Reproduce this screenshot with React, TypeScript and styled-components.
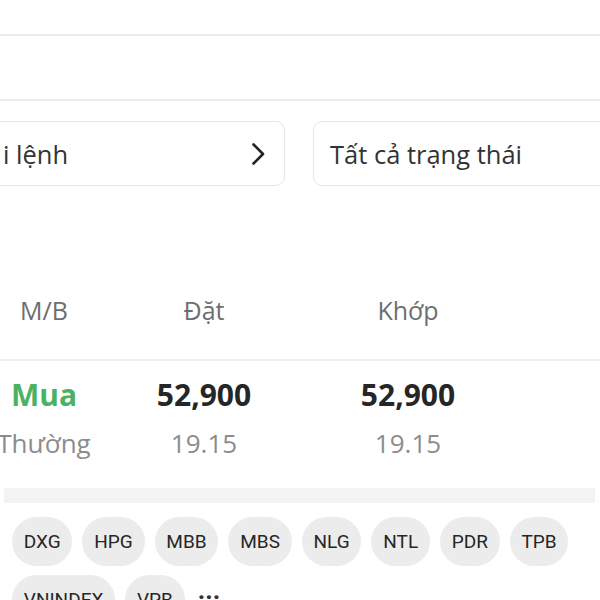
import React from "react";
import styled, { createGlobalStyle } from "styled-components";

const Global = createGlobalStyle`
  html, body { margin: 0; padding: 0; background: #ffffff; }
  body { width: 600px; height: 600px; overflow: hidden; font-family: "Open Sans", "Noto Sans", sans-serif; }
  * { box-sizing: border-box; }
`;

const Page = styled.div`
  width: 600px;
  height: 600px;
  overflow: hidden;
  display: flex;
  flex-direction: column;
`;

const Blank = styled.div<{ $h: number }>`
  height: ${(p) => p.$h}px;
  background: #ffffff;
  flex: 0 0 auto;
`;

const Divider = styled.div`
  height: 2px;
  background: #ececec;
  flex: 0 0 auto;
`;

const FilterRow = styled.div`
  display: flex;
  gap: 28px;
  margin-left: -14px;
  padding-top: 20px;
  flex: 0 0 auto;
`;

const FilterBox = styled.div<{ $w: number }>`
  flex: 0 0 ${(p) => p.$w}px;
  height: 65px;
  border: 1.5px solid #e6e6e6;
  border-radius: 9px;
  display: flex;
  align-items: center;
  justify-content: space-between;
  padding: 0 19px 0 16px;
  font-size: 25.5px;
  color: #333333;
  white-space: nowrap;
`;

const Chevron = () => (
  <svg width="14" height="24" viewBox="0 0 14 24" fill="none">
    <polyline points="2.5,2.5 12,12 2.5,21.5" stroke="#222" strokeWidth="2.6" strokeLinecap="round" strokeLinejoin="round" />
  </svg>
);

const Grid = styled.div`
  display: grid;
  grid-template-columns: 88px 232px 176px;
  flex: 0 0 auto;
`;

const HeaderRow = styled(Grid)`
  margin-top: 107px;
  padding-bottom: 32px;
  border-bottom: 2px solid #efefef;
`;

const HeadCell = styled.div`
  text-align: center;
  font-size: 25px;
  line-height: 34px;
  color: #6e6e6e;
`;

const DataRow = styled(Grid)`
  padding-top: 16px;
`;

const Cell = styled.div`
  display: flex;
  flex-direction: column;
  align-items: center;
  gap: 13px;
  white-space: nowrap;
`;

const Main = styled.div<{ $green?: boolean }>`
  font-size: 30px;
  line-height: 36px;
  font-weight: 700;
  color: ${(p) => (p.$green ? "#4cb263" : "#262626")};
`;

const Sub = styled.div`
  font-size: 26px;
  line-height: 34px;
  color: #8c8c8c;
`;

const Band = styled.div`
  margin: 28px 5px 0 4px;
  height: 15px;
  background: #f3f3f3;
  flex: 0 0 auto;
`;

const Chips = styled.div`
  display: flex;
  flex-wrap: wrap;
  align-items: flex-start;
  column-gap: 10px;
  row-gap: 9px;
  padding: 14px 12px 0;
  width: 600px;
`;

const Chip = styled.div`
  height: 49px;
  padding: 0 11.8px;
  border-radius: 25px;
  background: #ececec;
  display: flex;
  align-items: center;
  font-family: Roboto, "Liberation Sans", sans-serif;
  font-size: 19px;
  color: #262626;
`;

const More = styled.div`
  font-family: Roboto, "Liberation Sans", sans-serif;
  font-size: 26px;
  font-weight: 700;
  color: #333;
  padding-left: 3px;
  margin-top: 2px;
  line-height: 26px;
`;

const tickers = ["DXG", "HPG", "MBB", "MBS", "NLG", "NTL", "PDR", "TPB", "VNINDEX", "VPB"];

export default function App() {
  return (
    <Page>
      <Global />
      <Blank $h={34} />
      <Divider />
      <Blank $h={63} />
      <Divider />
      <FilterRow>
        <FilterBox $w={299}>
          <span>i lệnh</span>
          <Chevron />
        </FilterBox>
        <FilterBox $w={320}>
          <span>Tất cả trạng thái</span>
        </FilterBox>
      </FilterRow>
      <HeaderRow>
        <HeadCell>M/B</HeadCell>
        <HeadCell>Đặt</HeadCell>
        <HeadCell>Khớp</HeadCell>
      </HeaderRow>
      <DataRow>
        <Cell>
          <Main $green>Mua</Main>
          <Sub>Thường</Sub>
        </Cell>
        <Cell>
          <Main>52,900</Main>
          <Sub>19.15</Sub>
        </Cell>
        <Cell>
          <Main>52,900</Main>
          <Sub>19.15</Sub>
        </Cell>
      </DataRow>
      <Band />
      <Chips>
        {tickers.map((t) => (
          <Chip key={t}>{t}</Chip>
        ))}
        <More>...</More>
      </Chips>
    </Page>
  );
}
